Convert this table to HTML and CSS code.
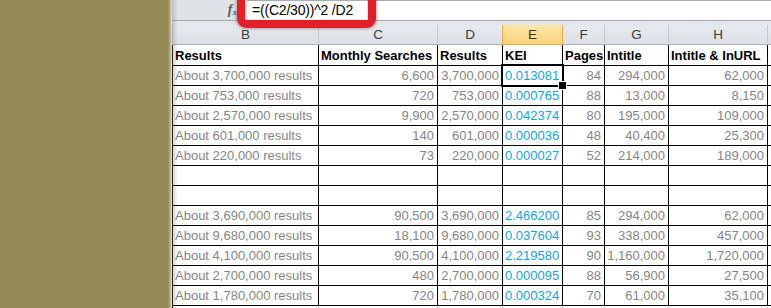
FILE: index.html
```html
<!DOCTYPE html>
<html>
<head>
<meta charset="utf-8">
<link rel="stylesheet" href="styles.css">
</head>
<body>
<div class="page">
  <div class="band"></div>
  <div class="sheet">
    <div class="fbar">
      <div class="fx-cell"><span class="fx">f<sub>x</sub></span></div>
      <div class="formula">=((C2/30))^2 /D2</div>
    </div>
    <div class="fgap"></div>
    <div class="grid">
      <div class="ch">B</div><div class="ch">C</div><div class="ch">D</div><div class="ch ch-sel">E</div><div class="ch">F</div><div class="ch">G</div><div class="ch">H</div><div class="ch ch-x"></div>

      <div class="c h">Results</div><div class="c h">Monthly Searches</div><div class="c h">Results</div><div class="c h">KEI</div><div class="c h">Pages</div><div class="c h">Intitle</div><div class="c h">Intitle &amp; InURL</div><div class="c x"></div>

      <div class="c t">About 3,700,000 results</div><div class="c n">6,600</div><div class="c n">3,700,000</div><div class="c n k sel">0.013081</div><div class="c n">84</div><div class="c n">294,000</div><div class="c n">62,000</div><div class="c x"></div>
      <div class="c t">About 753,000 results</div><div class="c n">720</div><div class="c n">753,000</div><div class="c n k">0.000765</div><div class="c n">88</div><div class="c n">13,000</div><div class="c n">8,150</div><div class="c x"></div>
      <div class="c t">About 2,570,000 results</div><div class="c n">9,900</div><div class="c n">2,570,000</div><div class="c n k">0.042374</div><div class="c n">80</div><div class="c n">195,000</div><div class="c n">109,000</div><div class="c x"></div>
      <div class="c t">About 601,000 results</div><div class="c n">140</div><div class="c n">601,000</div><div class="c n k">0.000036</div><div class="c n">48</div><div class="c n">40,400</div><div class="c n">25,300</div><div class="c x"></div>
      <div class="c t">About 220,000 results</div><div class="c n">73</div><div class="c n">220,000</div><div class="c n k">0.000027</div><div class="c n">52</div><div class="c n">214,000</div><div class="c n">189,000</div><div class="c x"></div>

      <div class="c"></div><div class="c"></div><div class="c"></div><div class="c"></div><div class="c"></div><div class="c"></div><div class="c"></div><div class="c x"></div>
      <div class="c"></div><div class="c"></div><div class="c"></div><div class="c"></div><div class="c"></div><div class="c"></div><div class="c"></div><div class="c x"></div>

      <div class="c t">About 3,690,000 results</div><div class="c n">90,500</div><div class="c n">3,690,000</div><div class="c n k">2.466200</div><div class="c n">85</div><div class="c n">294,000</div><div class="c n">62,000</div><div class="c x"></div>
      <div class="c t">About 9,680,000 results</div><div class="c n">18,100</div><div class="c n">9,680,000</div><div class="c n k">0.037604</div><div class="c n">93</div><div class="c n">338,000</div><div class="c n">457,000</div><div class="c x"></div>
      <div class="c t">About 4,100,000 results</div><div class="c n">90,500</div><div class="c n">4,100,000</div><div class="c n k">2.219580</div><div class="c n">90</div><div class="c n">1,160,000</div><div class="c n">1,720,000</div><div class="c x"></div>
      <div class="c t">About 2,700,000 results</div><div class="c n">480</div><div class="c n">2,700,000</div><div class="c n k">0.000095</div><div class="c n">88</div><div class="c n">56,900</div><div class="c n">27,500</div><div class="c x"></div>
      <div class="c t">About 1,780,000 results</div><div class="c n">720</div><div class="c n">1,780,000</div><div class="c n k">0.000324</div><div class="c n">70</div><div class="c n">61,000</div><div class="c n">35,100</div><div class="c x"></div>

      <div class="c e"></div><div class="c e"></div><div class="c e"></div><div class="c e"></div><div class="c e"></div><div class="c e"></div><div class="c e"></div><div class="c e x"></div>
    </div>
  </div>
  <div class="redbox"></div>
</div>
</body>
</html>
```

FILE: styles.css
```css
* { box-sizing: border-box; }
html, body {
  margin: 0;
  padding: 0;
  background: #fff;
}
.page {
  position: relative;
  width: 771px;
  height: 308px;
  overflow: hidden;
  display: flex;
  font-family: "Liberation Sans", Arial, sans-serif;
}
.band {
  flex: 0 0 172px;
  background: linear-gradient(to right, #958b57 0, #958b57 168px, #b3ab85 170px, #e9e7dc 172px);
}
.sheet {
  flex: 1;
  display: flex;
  flex-direction: column;
  position: relative;
  min-width: 0;
}
.sheet::before {
  content: "";
  position: absolute;
  left: 0;
  top: 0;
  bottom: 0;
  width: 6px;
  background: linear-gradient(to right, rgba(120,120,120,0.35), rgba(255,255,255,0));
  pointer-events: none;
  z-index: 3;
}
.fbar {
  flex: none;
  height: 21px;
  display: flex;
  border-bottom: 1px solid #a3a7ad;
}
.fx-cell {
  width: 75px;
  background: #dfe3e8;
  display: flex;
  justify-content: flex-end;
  align-items: center;
  padding-right: 10px;
}
.fx {
  font-family: "Liberation Serif", "Times New Roman", serif;
  font-style: italic;
  font-weight: bold;
  font-size: 14px;
  color: #555a60;
  line-height: 1;
}
.fx sub {
  font-size: 9px;
  vertical-align: -1px;
}
.formula {
  flex: 1;
  background: #fff;
  border-top: 1px solid #a9adb3;
  padding-left: 5px;
  font-size: 14px;
  line-height: 19px;
  color: #000;
  letter-spacing: -0.2px;
}
.fgap {
  flex: none;
  height: 4px;
  background: #e3e7ec;
}
.grid {
  flex: none;
  display: grid;
  grid-template-columns: 147px 119px 65px 60px 42px 64px 99px 1fr;
  grid-template-rows: 20px 21px repeat(12, 20px) 20px;
  font-size: 13px;
}
.ch {
  background: linear-gradient(#e6e9ee, #dce0e6);
  border-right: 1px solid #c3c8cf;
  border-bottom: 1px solid #abb1b9;
  text-align: center;
  color: #3c3c3c;
  font-size: 13.5px;
  line-height: 20px;
}
.ch:first-child {
  border-left: 1px solid #c3c8cf;
}
.ch-sel {
  background: linear-gradient(#fce7a8, #f9d27a);
  border-right: 1px solid #efa83f;
  border-bottom: 1px solid #efa83f;
  box-shadow: -1px 0 0 #efa83f;
  color: #333;
}
.ch-x {
  border-right: 0;
}
.c {
  border-right: 1px solid #000;
  border-bottom: 1px solid #000;
  white-space: nowrap;
  overflow: hidden;
  line-height: 19px;
  padding: 0 3px 0 2px;
  color: #858585;
}
.grid > .c:nth-child(8n+1) {
  border-left: 1px solid #000;
}
.c.h {
  font-weight: bold;
  color: #000;
  padding-top: 1px;
  line-height: 19px;
}
.c.n {
  text-align: right;
}
.c.k {
  color: #17a3e6;
}
.c.x {
  border-right: 0;
}
.c.e {
  border-bottom: 0;
  border-right: 1px solid #d4d8de;
}
.grid > .c.e:nth-child(8n+1) {
  border-left: 1px solid #000;
}
.sel {
  position: relative;
  overflow: visible;
}
.sel::after {
  content: "";
  position: absolute;
  left: -2px;
  top: -2px;
  right: -2px;
  bottom: -2px;
  border: 2px solid #000;
  box-shadow: inset 0 0 0 1px #fff;
  pointer-events: none;
}
.sel::before {
  content: "";
  position: absolute;
  right: -5px;
  bottom: -5px;
  width: 7px;
  height: 7px;
  background: #000;
  border: 1px solid #fff;
  z-index: 2;
}
.redbox {
  position: absolute;
  left: 237px;
  top: -12px;
  width: 139px;
  height: 40px;
  border: 8px solid #e3202a;
  border-radius: 9px;
  box-shadow: 0 0 3px 1px rgba(70, 20, 20, 0.35), inset 0 0 2px rgba(70, 20, 20, 0.3);
  z-index: 5;
}
```
